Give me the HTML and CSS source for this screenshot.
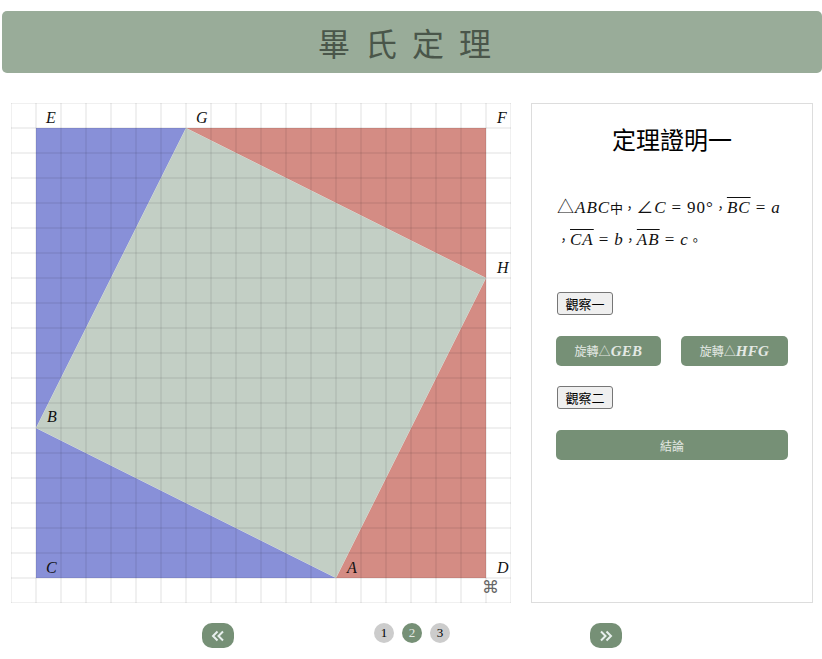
FILE: index.html
```html
<!DOCTYPE html>
<html lang="zh-Hant">
<head>
    <meta charset="UTF-8">
    <meta name="viewport" content="width=device-width, initial-scale=1.0">
    <title>畢氏定理</title>
    <link rel="stylesheet" href="styles.css">
</head>
<body>

    <header class="page-title">畢氏定理</header>

    <main class="content">
        <div class="board">
            <svg class="board-svg" width="500" height="500" viewBox="0 0 500 500">
                <polygon class="blue" points="25,25 175,25 25,325"></polygon>
                <polygon class="blue" points="25,325 325,475 25,475"></polygon>
                <polygon class="red" points="175,25 475,25 475,175"></polygon>
                <polygon class="red" points="475,175 475,475 325,475"></polygon>
                <polygon class="square" points="175,25 475,175 325,475 25,325"></polygon>
                <path class="grid" d="M0 0V500M25 0V500M50 0V500M75 0V500M100 0V500M125 0V500M150 0V500M175 0V500M200 0V500M225 0V500M250 0V500M275 0V500M300 0V500M325 0V500M350 0V500M375 0V500M400 0V500M425 0V500M450 0V500M475 0V500M500 0V500"></path>
                <path class="grid" d="M0 0H500M0 25H500M0 50H500M0 75H500M0 100H500M0 125H500M0 150H500M0 175H500M0 200H500M0 225H500M0 250H500M0 275H500M0 300H500M0 325H500M0 350H500M0 375H500M0 400H500M0 425H500M0 450H500M0 475H500M0 500H500"></path>
                <text class="label" x="35" y="20">E</text>
                <text class="label" x="185" y="20">G</text>
                <text class="label" x="486" y="20">F</text>
                <text class="label" x="486" y="170">H</text>
                <text class="label" x="36" y="319">B</text>
                <text class="label" x="35" y="470">C</text>
                <text class="label" x="336" y="470">A</text>
                <text class="label" x="486" y="470">D</text>
                <text class="cmd" x="471" y="490">⌘</text>
            </svg>
        </div>

        <section class="panel">
            <h2 class="panel-title">定理證明一</h2>
            <p class="math-text">
                △<i>ABC</i><span class="cjk">中，</span>∠<i>C</i><span class="rel">=</span>90°<span class="cjk">，</span><i class="over">BC</i><span class="rel">=</span><i>a</i><br>
                <span class="cjk">，</span><i class="over">CA</i><span class="rel">=</span><i>b</i><span class="cjk">，</span><i class="over">AB</i><span class="rel">=</span><i>c</i><span class="cjk">。</span>
            </p>
            <button class="plain-btn first">觀察一</button>
            <div class="rotate-row">
                <button class="green-btn">旋轉△<b><i>GEB</i></b></button>
                <button class="green-btn">旋轉△<b><i>HFG</i></b></button>
            </div>
            <button class="plain-btn second">觀察二</button>
            <button class="green-btn wide">結論</button>
        </section>
    </main>

    <footer class="pager">
        <button class="arrow-btn">
            <svg width="14" height="12" viewBox="0 0 14 12"><path d="M6.5 1.5 2 6l4.5 4.500M12 1.500 7.500 6l4.500 4.500"></path></svg>
        </button>
        <div class="dots">
            <span class="dot">1</span>
            <span class="dot active">2</span>
            <span class="dot">3</span>
        </div>
        <button class="arrow-btn">
            <svg width="14" height="12" viewBox="0 0 14 12"><path d="M2 1.500 6.500 6 2 10.500M7.500 1.500 12 6l-4.500 4.500"></path></svg>
        </button>
    </footer>

</body>
</html>
```

FILE: styles.css
```css
* {
    margin: 0;
    padding: 0;
    box-sizing: border-box;
}

body {
    font-family: "Noto Sans CJK TC", "Liberation Sans", sans-serif;
    background-color: #fff;
    padding: 11px 0 0 2px;
}

.page-title {
    height: 62px;
    line-height: 62px;
    text-align: center;
    font-size: 32px;
    letter-spacing: 15px;
    color: #4a564a;
    background-color: #99ac99;
    border-radius: 5px;
}

.content {
    display: flex;
    gap: 20px;
    margin-top: 30px;
    padding-left: 9px;
}

.board {
    width: 500px;
    height: 500px;
}

.board-svg {
    display: block;
}

.blue {
    fill: #8890d8;
}

.red {
    fill: #d48c84;
}

.square {
    fill: #c3cfc5;
}

.grid {
    fill: none;
    stroke: rgba(0, 0, 0, 0.058);
    stroke-width: 2;
}

.label {
    font-family: "Liberation Serif", serif;
    font-style: italic;
    font-size: 16px;
    fill: #111;
}

.cmd {
    font-family: "DejaVu Sans", sans-serif;
    font-size: 17px;
    fill: #666;
}

.panel {
    width: 282px;
    height: 500px;
    padding: 0 24px;
    border: 1px solid #ddd;
}

.panel-title {
    margin-top: 20px;
    height: 30px;
    line-height: 30px;
    font-size: 24px;
    font-weight: 400;
    text-align: center;
    color: #000;
}

.math-text {
    margin-top: 38px;
    margin-left: 1px;
    font-family: "Liberation Serif", "Noto Sans CJK TC", serif;
    font-size: 17px;
    line-height: 32px;
    letter-spacing: 1px;
    white-space: nowrap;
    color: #111;
}

.cjk {
    font-family: "Noto Sans CJK TC", sans-serif;
    font-size: 13px;
    letter-spacing: 0;
}

.rel {
    margin: 0 5px;
}

.over {
    text-decoration: overline;
}

.plain-btn {
    display: block;
    width: 56px;
    height: 23px;
    margin-left: 1px;
    font-family: "Noto Sans CJK TC", sans-serif;
    font-size: 13px;
    color: #000;
    background-color: #efefef;
    border: 1px solid #767676;
    border-radius: 3px;
}

.plain-btn.first {
    margin-top: 36px;
}

.plain-btn.second {
    margin-top: 20px;
}

.rotate-row {
    display: grid;
    grid-template-columns: 105px 107px;
    gap: 20px;
    margin-top: 21px;
}

.green-btn {
    height: 30px;
    font-family: "Noto Sans CJK TC", sans-serif;
    font-size: 12px;
    color: #e4e9e4;
    background-color: #769076;
    border: none;
    border-radius: 5px;
}

.green-btn i {
    font-family: "Liberation Serif", serif;
    font-size: 15px;
    letter-spacing: 0.3px;
}

.green-btn.wide {
    display: block;
    width: 100%;
    margin-top: 21px;
}

.pager {
    display: flex;
    justify-content: center;
    gap: 140px;
    margin-top: 20px;
}

.arrow-btn {
    display: flex;
    align-items: center;
    justify-content: center;
    width: 32px;
    height: 25px;
    background-color: #769076;
    border: none;
    border-radius: 10px;
}

.arrow-btn path {
    fill: none;
    stroke: #e8f0ee;
    stroke-width: 2;
}

.dots {
    display: flex;
    gap: 8px;
}

.dot {
    width: 20px;
    height: 20px;
    line-height: 20px;
    text-align: center;
    font-family: "Liberation Serif", serif;
    font-size: 13px;
    color: #000;
    background-color: #ccc;
    border-radius: 50%;
}

.dot.active {
    color: #e4e9e4;
    background-color: #769076;
}
```
